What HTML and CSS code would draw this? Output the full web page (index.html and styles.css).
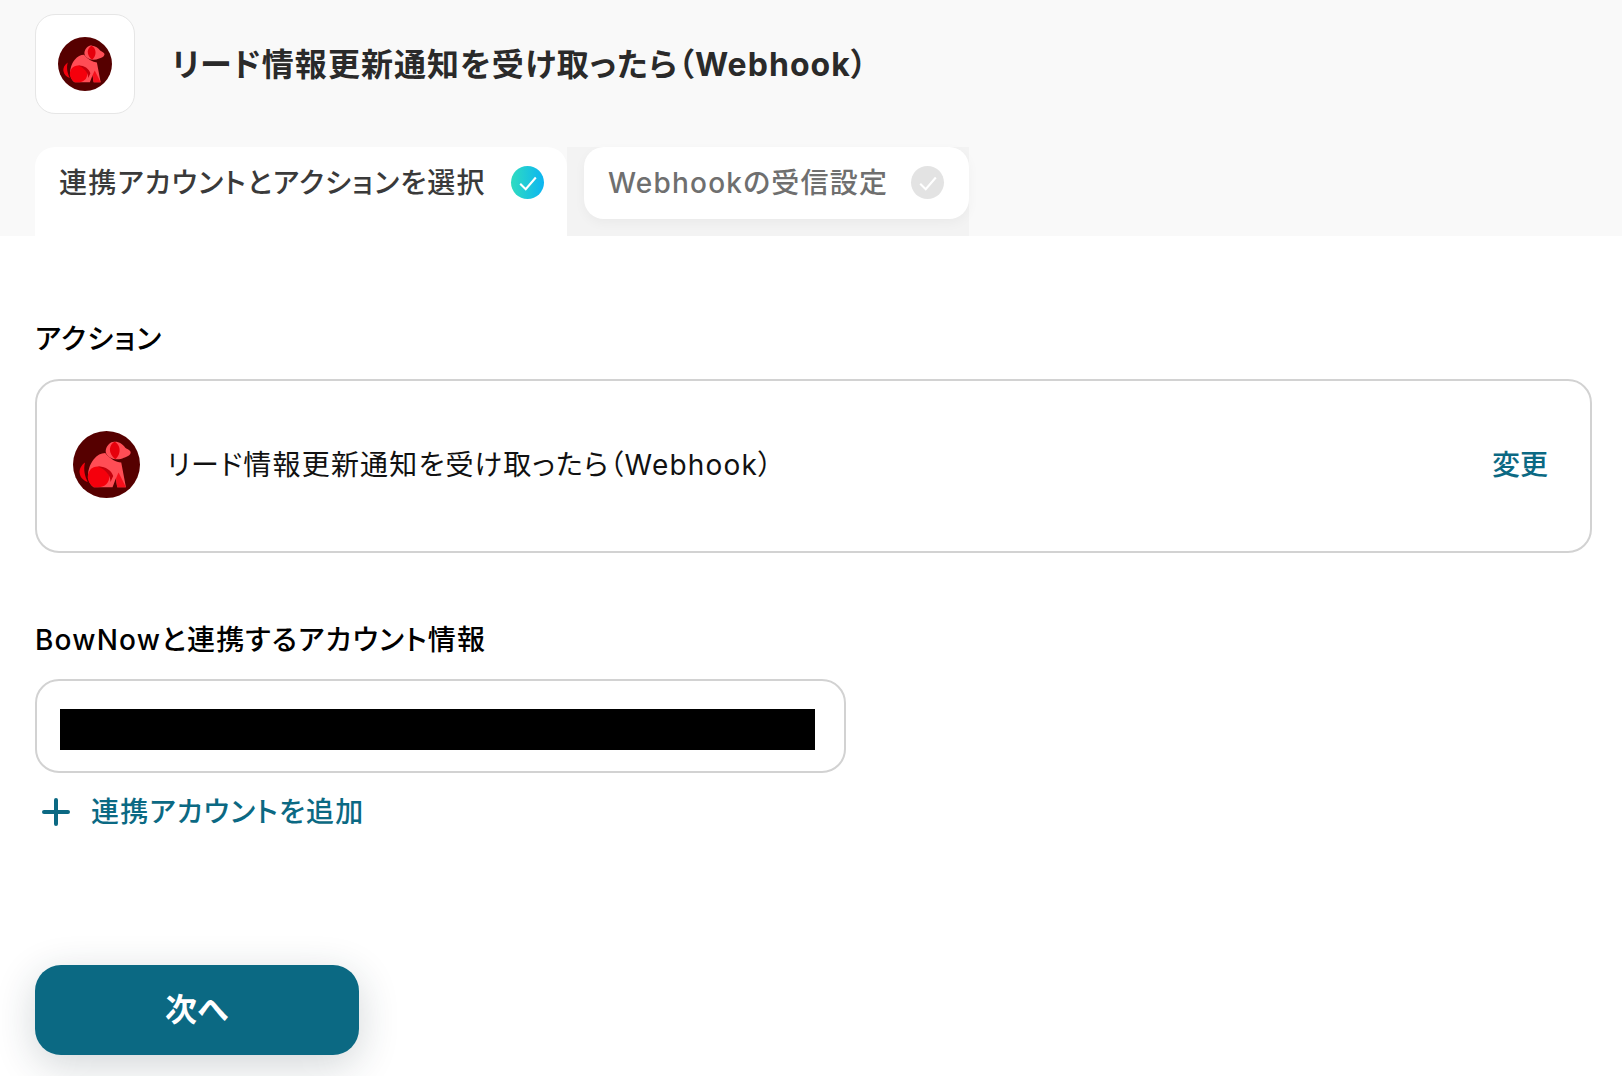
FILE: index.html
```html
<!DOCTYPE html>
<html lang="ja">
<head>
<meta charset="utf-8">
<title>BowNow</title>
<link rel="stylesheet" href="styles.css">
</head>
<body>
<svg class="defs" width="0" height="0" aria-hidden="true">
  <symbol id="dog" viewBox="0 0 100 100">
    <circle cx="50" cy="50" r="50" fill="#560000"/>
    <path d="M18 47 C12 51 9 58 10 63 C11 70 16 74 22 76 C18 68 15 58 18 47 Z" fill="#f5000c"/>
    <path d="M48 33 C42 33 36 36 31 42 C25 49 21 62 23 71 C24 77 27 82 31 84 L59 84 L64 71 L66 84 L79 84 L72 47 C64 47 56 42 48 33 Z" fill="#ff4d55"/>
    <path d="M37 53 C47 53 54 60 54 69 C54 78 47 84 37 84 L31 84 C25 80 22 74 22 69 C22 60 28 53 37 53 Z" fill="#f5000c"/>
    <path d="M37 53 C47 52 57 58 60 67 L56 76 C56 66 48 57 37 53 Z" fill="#c2000c"/>
    <path d="M68 62 L79 84 L66 84 L64 71 Z" fill="#f5101c"/>
    <path d="M49 28 C51 20 57 15 63 16 C69 16 75 20 78 25 C82 28 87 29 86 33 C85 37 80 39 76 40 C70 43 62 43 56 40 C51 37 48 33 49 28 Z" fill="#ff4d55"/>
    <path d="M62 16 C68 19 71 26 69 33 C68 37 66 40 63 42 C58 38 55 33 55 27 C56 21 58 18 62 16 Z" fill="#e6000c"/>
  </symbol>
</svg>
<header class="header">
  <div class="title-row">
    <div class="app-box"><svg class="dog-small"><use href="#dog"/></svg></div>
    <h1 class="title">リード情報更新通知を受け取ったら（Webhook）</h1>
  </div>
  <div class="tabs">
    <div class="tab tab-active">
      <span class="tab-text">連携アカウントとアクションを選択</span>
      <span class="check check-on">
        <svg viewBox="0 0 16 16" class="check-icon"><path d="M3.2 8.4 L6.6 11.8 L12.8 4.6"/></svg>
      </span>
    </div>
    <div class="tab-rest">
      <div class="tab tab-idle">
        <span class="tab-text">Webhookの受信設定</span>
        <span class="check check-off">
          <svg viewBox="0 0 16 16" class="check-icon"><path d="M3.2 8.4 L6.6 11.8 L12.8 4.6"/></svg>
        </span>
      </div>
    </div>
  </div>
</header>
<main class="main">
  <section class="action-section">
    <h2 class="label">アクション</h2>
    <div class="action-card">
      <svg class="dog-large"><use href="#dog"/></svg>
      <span class="action-name">リード情報更新通知を受け取ったら（Webhook）</span>
      <a class="change">変更</a>
    </div>
  </section>
  <section class="account-section">
    <h2 class="label">BowNowと連携するアカウント情報</h2>
    <div class="account-input"><div class="redacted"></div></div>
    <a class="add-account">
      <svg class="plus" viewBox="0 0 28 28"><path d="M14 2 V26 M2 14 H26"/></svg>
      <span>連携アカウントを追加</span>
    </a>
  </section>
  <button class="next" type="button"><span class="next-text">次へ</span></button>
</main>
</body>
</html>
```
FILE: styles.css
```css
* { box-sizing: border-box; }
html, body { margin: 0; padding: 0; }
body {
  width: 1622px;
  height: 1076px;
  overflow: hidden;
  background: #fff;
  font-family: Inter, "Noto Sans CJK JP", sans-serif;
  font-feature-settings: "palt";
  color: #1f1f1f;
}
.defs { position: absolute; }
.header {
  height: 236px;
  background: #f9f9f9;
  padding: 14px 0 0 35px;
}
.title-row { display: flex; align-items: flex-start; height: 100px; }
.app-box {
  width: 100px;
  height: 100px;
  background: #fff;
  border: 1px solid #e6e6e6;
  border-radius: 20px;
  display: flex;
  align-items: center;
  justify-content: center;
}
.dog-small { width: 54px; height: 54px; }
.title {
  margin: 30px 0 0 37px;
  font-size: 32px;
  line-height: 42px;
  font-weight: 700;
  letter-spacing: 1.05px;
  color: #2a2a2a;
}
.tabs { display: flex; margin-top: 33px; height: 89px; }
.tab { display: flex; align-items: flex-start; background: #fff; }
.tab-active {
  width: 532px;
  padding: 18px 0 0 24px;
  border-radius: 20px 20px 0 0;
  color: #3a3a3a;
}
.tab-rest {
  width: 402px;
  background: #f3f3f3;
  padding-left: 17px;
}
.tab-idle {
  width: 385px;
  height: 72px;
  padding: 18px 0 0 24px;
  border-radius: 20px;
  color: #6f6f6f;
  box-shadow: 0 4px 12px rgba(0,0,0,.04);
}
.tab-text { font-size: 28px; font-weight: 500; letter-spacing: 1.2px; line-height: 36px; white-space: nowrap; }
.tab-active .tab-text { width: 452px; }
.tab-idle .tab-text { width: 303px; }
.check {
  width: 33px;
  height: 33px;
  margin-top: 1px;
  border-radius: 50%;
  display: flex;
  align-items: center;
  justify-content: center;
}
.check-on { background: linear-gradient(90deg, #2fdcc0, #0cb5f2); }
.check-off { background: #e3e3e3; }
.check-icon { width: 26px; height: 26px; fill: none; stroke: #fff; stroke-width: 1.3; }
.main { padding: 0 30px 0 35px; }
.label {
  margin: 0;
  font-size: 28px;
  font-weight: 500;
  line-height: 36px;
  letter-spacing: 1.2px;
  color: #000;
}
.action-section { padding-top: 85px; }
.action-card {
  margin-top: 22px;
  height: 174px;
  border: 2px solid #d2d2d2;
  border-radius: 24px;
  display: flex;
  align-items: center;
  padding: 0 42px 3px 36px;
}
.dog-large { width: 67px; height: 67px; flex: none; }
.action-name {
  margin: 0 0 4px 27px;
  font-size: 28px;
  letter-spacing: 1.2px;
  color: #111;
}
.change { margin: 0 0 4px auto; font-size: 28px; font-weight: 500; color: #0b6983; }
.account-section { padding-top: 69px; }
.account-input {
  margin-top: 21px;
  width: 811px;
  height: 94px;
  border: 2px solid #d2d2d2;
  border-radius: 24px;
  padding: 28px 0 0 23px;
}
.redacted { width: 755px; height: 41px; background: #000; }
.add-account {
  display: flex;
  align-items: center;
  margin-top: 20px;
  padding-left: 7px;
  font-size: 28px;
  font-weight: 500;
  line-height: 38px;
  letter-spacing: 1.2px;
  color: #0b6983;
}
.plus { width: 28px; height: 28px; fill: none; stroke: #0b6983; stroke-width: 4; stroke-linecap: round; margin-right: 21px; }
.next {
  display: block;
  margin-top: 134px;
  width: 324px;
  height: 90px;
  border: 0;
  border-radius: 26px;
  background: #0b6983;
  color: #fff;
  font-family: inherit;
  font-size: 32px;
  font-weight: 600;
  box-shadow: 0 10px 40px rgba(30,50,60,.2);
}
.next-text { display: block; margin-top: -6px; }
```
